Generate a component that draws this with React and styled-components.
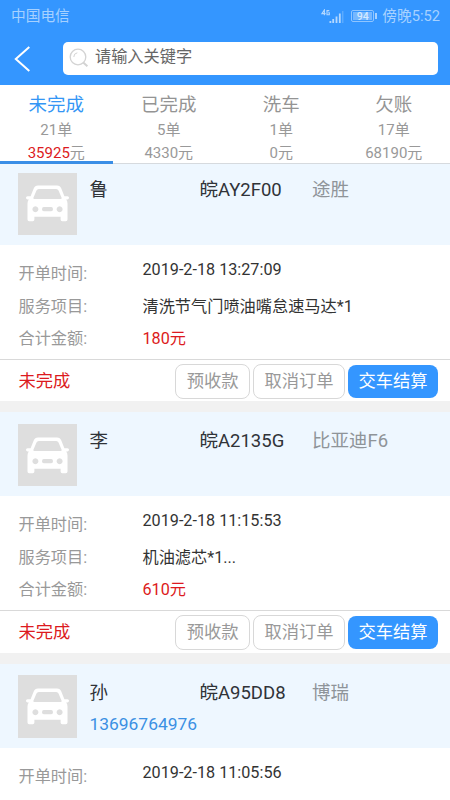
import React from 'react'
import styled, { createGlobalStyle } from 'styled-components'

const tabs = [
    { id: 1, title: '未完成', count: 21, total: '35925', active: true },
    { id: 2, title: '已完成', count: 5, total: '4330' },
    { id: 3, title: '洗车', count: 1, total: '0' },
    { id: 4, title: '欠账', count: 17, total: '68190' }
]

const orders = [
    { id: 1, name: '鲁', plate: '皖AY2F00', model: '途胜', time: '2019-2-18 13:27:09', service: '清洗节气门喷油嘴怠速马达*1', price: '180元' },
    { id: 2, name: '李', plate: '皖A2135G', model: '比亚迪F6', time: '2019-2-18 11:15:53', service: '机油滤芯*1...', price: '610元' },
    { id: 3, name: '孙', plate: '皖A95DD8', model: '博瑞', phone: '13696764976', time: '2019-2-18 11:05:56' }
]

export default function App() {
    return (
        <Screen>
            <GlobalStyle />
            <StatusBar>
                <span>中国电信</span>
                <StatusRight>
                    <SignalIcon />
                    <Battery><span>94</span></Battery>
                    <span>傍晚5:52</span>
                </StatusRight>
            </StatusBar>
            <SearchBar>
                <BackIcon />
                <SearchBox>
                    <SearchIcon />
                    <span>请输入关键字</span>
                </SearchBox>
            </SearchBar>
            <Tabs>
                {tabs.map(tab => (
                    <Tab key={tab.id} $active={tab.active}>
                        <TabTitle $active={tab.active}>{tab.title}</TabTitle>
                        <TabLine>{tab.count}单</TabLine>
                        <TabLine><Total $active={tab.active}>{tab.total}</Total>元</TabLine>
                    </Tab>
                ))}
            </Tabs>
            <List>
                <Scrolled>
                    {orders.map(order => <Order key={order.id} order={order} />)}
                </Scrolled>
            </List>
        </Screen>
    )
}

function Order({ order }) {
    const { name, plate, model, phone, time, service, price } = order
    return (
        <Card>
            <CardHeader>
                <Thumb><CarIcon /></Thumb>
                <Info>
                    <Owner>
                        <span>{name}</span>
                        <span>{plate}</span>
                        <Model>{model}</Model>
                    </Owner>
                    {phone && <Phone>{phone}</Phone>}
                </Info>
            </CardHeader>
            <Details>
                <Row><Label>开单时间:</Label><Time>{time}</Time></Row>
                {service && <Row><Label>服务项目:</Label><Value>{service}</Value></Row>}
                {price && <Row><Label>合计金额:</Label><Value $red>{price}</Value></Row>}
            </Details>
            {price && (
                <CardFooter>
                    <State>未完成</State>
                    <Button $width='75px'>预收款</Button>
                    <Button $width='92.5px'>取消订单</Button>
                    <Button $width='90px' $primary>交车结算</Button>
                </CardFooter>
            )}
        </Card>
    )
}

const SignalIcon = () => (
    <svg width='23' height='15' viewBox='0 0 23 15' fill='none' stroke='#b4d8ff'>
        <path d='M3.4 6.2V.9L.9 4.6H4.6M8.3 1.6H6V5.7H8.3V3.7H7.3' strokeWidth='1.1' />
        <path d='M9.4 12v2M12.2 10v4M15.5 7.5v6.5M18.8 4.5v9.5' strokeWidth='1.8' />
        <path d='M21.8 2v12' strokeWidth='1' opacity='.45' />
    </svg>
)

const BackIcon = () => (
    <svg width='17' height='28' viewBox='0 0 17 28' fill='none' stroke='#fff' strokeWidth='2'>
        <path d='M15.3 2L1.8 14L15.3 26' />
    </svg>
)

const SearchIcon = () => (
    <svg width='20' height='20' viewBox='0 0 20 20' fill='none' stroke='#d3d3d3' strokeWidth='1.3'>
        <circle cx='9' cy='9' r='7.8' />
        <path d='M4.8 9a4.2 4.2 0 0 1 3.5-4.2' strokeWidth='1' />
        <path d='M14.2 14.4l4.2 3.8' strokeWidth='2' />
    </svg>
)

const CarIcon = () => (
    <svg width='43' height='37' viewBox='0 0 43 37'>
        <path fill='#fff' fillRule='evenodd' d='M12 .5H31Q34.2 .5 35.3 3.5L38.4 11.3H41.5Q43 11.3 43 12.8Q43 14.5 41.3 14.6H40.2Q41.5 16 41.5 18.5V34.5Q41.5 36.2 39.8 36.2H36.3Q34.6 36.2 34.6 34.5V31.8H8.4V34.5Q8.4 36.2 6.7 36.2H3.2Q1.5 36.2 1.5 34.5V18.5Q1.5 16 2.8 14.6H1.7Q0 14.5 0 12.8Q0 11.3 1.5 11.3H4.6L7.7 3.5Q8.8 .5 12 .5ZM12.8 4Q11.1 4 10.5 5.6L7.4 12.8Q7 14 8.4 14H34.6Q36 14 35.6 12.8L32.5 5.6Q31.9 4 30.2 4ZM9.4 21.3a3 3 0 1 0 .01 0ZM33.6 21.3a3 3 0 1 0 .01 0ZM17.8 22.1Q16 22.1 16 24.2T17.8 26.3H25.2Q27 26.3 27 24.2T25.2 22.1Z' />
    </svg>
)

const GlobalStyle = createGlobalStyle`
*{
    box-sizing:border-box;
}
body{
    margin:0;
    background:#fff;
    font-family:Roboto, 'Noto Sans CJK SC', sans-serif;
    font-weight:400;
}
`
const Screen = styled.div`
width:450px;
height:800px;
display:flex;
flex-direction:column;
overflow:hidden;
white-space:nowrap;
`
const StatusBar = styled.div`
flex:none;
height:32px;
padding:0 10px 0 11px;
display:flex;
justify-content:space-between;
align-items:center;
background:#3496ff;
color:#a6d1ff;
font-size:14.7px;
line-height:32px;
`
const StatusRight = styled.div`
display:flex;
align-items:center;
svg{
    margin-right:7px;
}
`
const Battery = styled.div`
width:23px;
height:12px;
margin-right:8px;
padding:1px;
border:1px solid #8fc5ff;
border-radius:2px;
position:relative;
span{
    display:block;
    height:8px;
    background:#75b7ff;
    color:#d4e9ff;
    font-size:10.5px;
    font-weight:500;
    line-height:9px;
    text-align:center;
}
&::after{
    content:'';
    position:absolute;
    right:-4px;
    top:2px;
    width:2px;
    height:6px;
    background:#a6d1ff;
}
`
const SearchBar = styled.div`
flex:none;
height:53px;
padding:10px 12px 0 14px;
display:flex;
align-items:flex-start;
background:#3496ff;
> svg{
    margin:3px 32px 0 0;
}
`
const SearchBox = styled.div`
flex:1;
height:33px;
padding-left:6px;
display:flex;
border-radius:5px;
background:#fff;
color:#666;
font-size:16.2px;
line-height:29px;
svg{
    margin:6px 6px 0 0;
}
`
const Tabs = styled.div`
flex:none;
height:79px;
display:grid;
grid-template-columns:repeat(4, 1fr);
border-bottom:1px solid #d6dade;
`
const Tab = styled.div`
height:79px;
padding-top:7px;
text-align:center;
border-bottom:${props => props.$active ? '3px solid #3a8ee6' : 'none'};
`
const TabTitle = styled.div`
height:27px;
font-size:18.5px;
line-height:27px;
color:${props => props.$active ? '#3496f5' : '#949494'};
`
const TabLine = styled.div`
height:22.5px;
font-size:15px;
line-height:22.5px;
color:#999;
`
const Total = styled.span`
color:${props => props.$active ? '#dc1a20' : 'inherit'};
`
const List = styled.div`
flex:1;
min-height:0;
overflow:hidden;
background:#f1f1f1;
`
const Scrolled = styled.div`
margin-top:-3px;
`
const Card = styled.div`
height:240.3px;
margin-bottom:11px;
background:#fff;
`
const CardHeader = styled.div`
height:84px;
padding:11.5px 0 0 18px;
display:flex;
background:#eef7ff;
`
const Thumb = styled.div`
width:59px;
height:62.5px;
display:flex;
align-items:center;
justify-content:center;
background:#dedede;
`
const Info = styled.div`
padding:2.5px 0 0 12.5px;
`
const Owner = styled.div`
display:grid;
grid-template-columns:110px 112.5px 1fr;
height:30px;
font-size:18.5px;
line-height:30px;
color:#303338;
`
const Model = styled.span`
color:#8f9499;
`
const Phone = styled.div`
font-size:17.4px;
line-height:33px;
color:#3b90e3;
`
const Details = styled.div`
height:114px;
padding:12px 0 0 18.5px;
`
const Row = styled.div`
display:flex;
height:32.6px;
font-size:16.2px;
line-height:34px;
`
const Label = styled.span`
width:124px;
color:#999;
`
const Value = styled.span`
color:${props => props.$red ? '#dc1a20' : '#333'};
`
const Time = styled(Value)`
line-height:26px;
`
const CardFooter = styled.div`
height:42.3px;
padding:4px 12px 0 18.5px;
display:flex;
gap:2.7px;
border-top:1px solid #d9d9d9;
`
const State = styled.span`
flex:1;
font-size:17.3px;
line-height:35px;
color:#dc1a20;
`
const Button = styled.button`
flex:none;
width:${props => props.$width};
height:${props => props.$primary ? '33px' : '35px'};
margin-top:${props => props.$primary ? '1px' : '0'};
padding:0 0 2px;
border:${props => props.$primary ? 'none' : '1px solid #d8d8d8'};
border-radius:8px;
background:${props => props.$primary ? '#3496ff' : '#fff'};
color:${props => props.$primary ? '#fff' : '#999'};
font-family:inherit;
font-size:17.3px;
line-height:28px;
`
